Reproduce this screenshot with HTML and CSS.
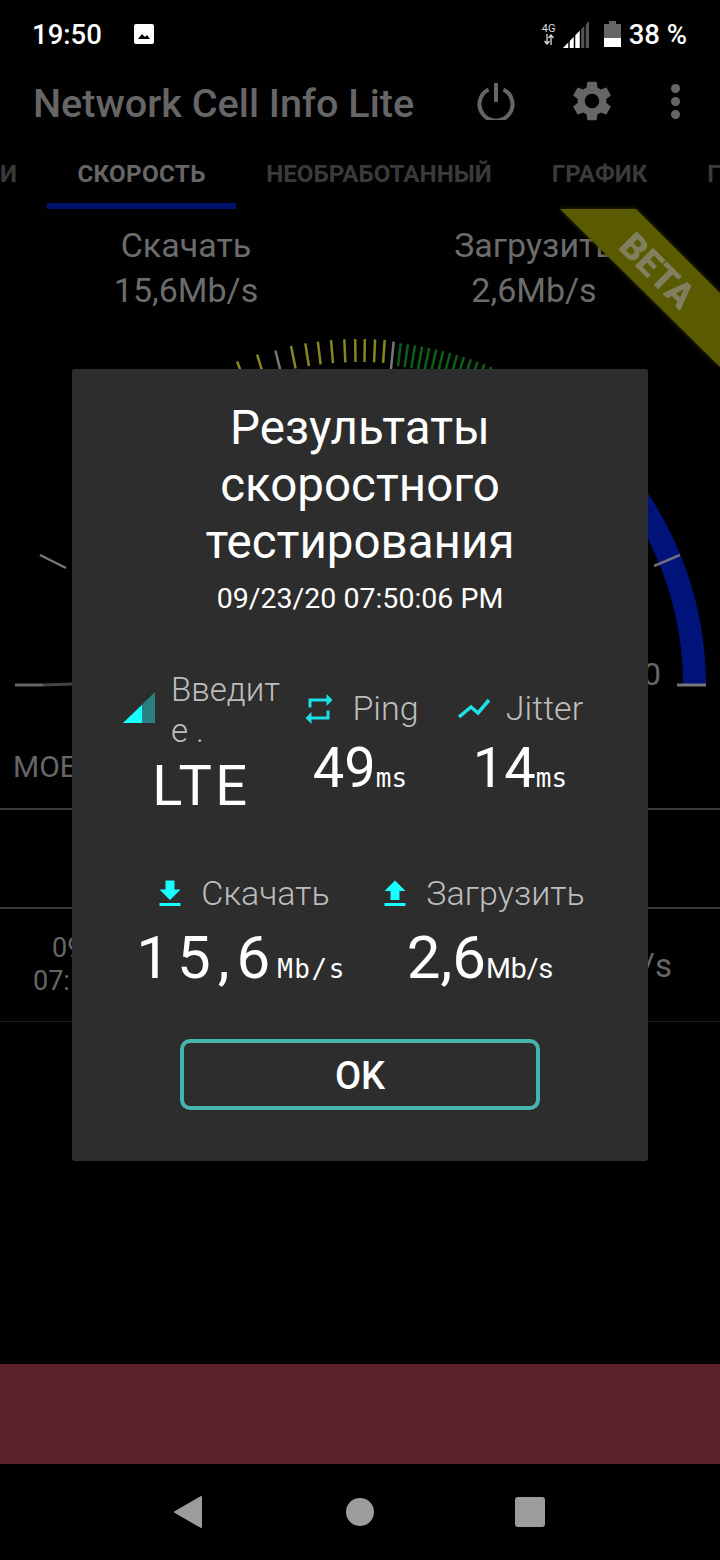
FILE: index.html
```html
<!DOCTYPE html>
<html lang="ru">
<head>
    <meta charset="UTF-8">
    <meta name="viewport" content="width=device-width, initial-scale=1.0">
    <title>Network Cell Info Lite</title>
    <link rel="stylesheet" href="styles.css">
</head>
<body>
    <div class="screen">
        <!-- status bar -->
        <div class="statusBar">
            <div class="statusLeft">
                <span class="clock">19:50</span>
                <svg class="imgIcon" width="22" height="22" viewBox="0 0 22 22">
                    <path d="M3 1h16a2 2 0 0 1 2 2v16a2 2 0 0 1-2 2H3a2 2 0 0 1-2-2V3a2 2 0 0 1 2-2z" fill="#fff"/>
                    <path d="M5 16l4-5 3 3 2-2 3 4z" fill="#000"/>
                </svg>
            </div>
            <div class="statusRight">
                <div class="netType">
                    <span>4G</span>
                    <svg width="12" height="11" viewBox="0 0 12 11">
                        <path d="M4 0v9M1.500 7L4 10l2.500-3M8 11V2M5.500 4L8 1l2.500 3" fill="none" stroke="#ddd" stroke-width="1.300"/>
                    </svg>
                </div>
                <svg class="signal" width="28" height="27" viewBox="0 0 28 27">
                    <path d="M1 27L27 0v27z" fill="#555"/>
                    <path d="M1 27L18 9.500V27z" fill="#fff"/>
                    <path d="M7 27v-8M12.500 27V13M18.500 27V8M23 27V3" stroke="#000" stroke-width="1.500"/>
                </svg>
                <svg class="battery" width="17" height="26" viewBox="0 0 17 26">
                    <path d="M5 3V0h7v3h5v23H0V3z" fill="#666"/>
                    <path d="M0 17h17v9H0z" fill="#fff"/>
                </svg>
                <span class="clock">38 %</span>
            </div>
        </div>

        <!-- app bar -->
        <header class="appBar">
            <h1>Network Cell Info Lite</h1>
            <svg class="barIcon" width="38" height="38" viewBox="0 0 38 38">
                <path d="M11.500 7.500a16.500 16.500 0 1 0 15 0M19 1v19" fill="none" stroke="#666" stroke-width="4"/>
            </svg>
            <svg class="barIcon gearIcon" width="48" height="48" viewBox="0 0 24 24">
                <path fill="#666" d="M19.140 12.940c.04-.3.06-.61.06-.94 0-.32-.02-.64-.07-.94l2.030-1.580c.18-.14.23-.41.12-.61l-1.920-3.320c-.12-.22-.37-.29-.59-.22l-2.390.96c-.5-.38-1.030-.7-1.620-.94l-.36-2.540c-.04-.24-.24-.41-.48-.41h-3.840c-.24 0-.43.17-.47.41l-.36 2.540c-.59.24-1.130.57-1.620.94l-2.390-.96c-.22-.08-.47 0-.59.22L2.740 8.870c-.12.21-.08.47.12.61l2.030 1.580c-.05.3-.09.63-.09.94s.02.64.07.94l-2.030 1.580c-.18.14-.23.41-.12.61l1.920 3.320c.12.22.37.29.59.22l2.390-.96c.5.38 1.030.7 1.620.94l.36 2.540c.05.24.24.41.48.41h3.840c.24 0 .44-.17.47-.41l.36-2.540c.59-.24 1.130-.56 1.620-.94l2.390.96c.22.08.47 0 .59-.22l1.920-3.320c.12-.22.07-.47-.12-.61l-2.010-1.580zM12 15.600c-1.980 0-3.600-1.620-3.600-3.600s1.620-3.600 3.600-3.600 3.600 1.620 3.600 3.600-1.620 3.600-3.600 3.600z"/>
            </svg>
            <div class="barIcon moreIcon"><i></i><i></i><i></i></div>
        </header>

        <!-- tabs -->
        <nav class="tabs">
            <div class="tab">И</div>
            <div class="tab active">СКОРОСТЬ</div>
            <div class="tab">НЕОБРАБОТАННЫЙ</div>
            <div class="tab">ГРАФИК</div>
            <div class="tab">ГЕО</div>
        </nav>

        <!-- speed numbers -->
        <div class="speedRow">
            <div class="speedCol">
                <div>Скачать</div>
                <div>15,6Mb/s</div>
            </div>
            <div class="speedCol">
                <div>Загрузить</div>
                <div>2,6Mb/s</div>
            </div>
        </div>

        <!-- gauge -->
        <svg class="gauge" width="720" height="370" viewBox="0 330 720 370">
            <path d="M694.500 685A334.500 334.500 0 0 0 616 470" fill="none" stroke="#00137a" stroke-width="23"/>
            <g stroke="#87871f" stroke-width="2.500">
                <line x1="360" y1="339" x2="360" y2="362" transform="rotate(-20.800 360 685)"/>
                <line x1="360" y1="339" x2="360" y2="362" transform="rotate(-17.300 360 685)"/>
                <line x1="360" y1="339" x2="360" y2="362" transform="rotate(-11.500 360 685)"/>
                <line x1="360" y1="339" x2="360" y2="362" transform="rotate(-9.100 360 685)"/>
                <line x1="360" y1="339" x2="360" y2="362" transform="rotate(-7 360 685)"/>
                <line x1="360" y1="339" x2="360" y2="362" transform="rotate(-4.800 360 685)"/>
                <line x1="360" y1="339" x2="360" y2="362" transform="rotate(-2.600 360 685)"/>
                <line x1="360" y1="339" x2="360" y2="362" transform="rotate(-.8 360 685)"/>
                <line x1="360" y1="339" x2="360" y2="362" transform="rotate(.8 360 685)"/>
                <line x1="360" y1="339" x2="360" y2="362" transform="rotate(2.500 360 685)"/>
                <line x1="360" y1="339" x2="360" y2="362" transform="rotate(4.100 360 685)"/>
            </g>
            <g stroke="#0f5f14" stroke-width="2.500">
                <line x1="360" y1="341" x2="360" y2="364" transform="rotate(6.800 360 685)"/>
                <line x1="360" y1="341" x2="360" y2="364" transform="rotate(8 360 685)"/>
                <line x1="360" y1="341" x2="360" y2="364" transform="rotate(9.200 360 685)"/>
                <line x1="360" y1="341" x2="360" y2="364" transform="rotate(10.400 360 685)"/>
                <line x1="360" y1="341" x2="360" y2="364" transform="rotate(11.600 360 685)"/>
                <line x1="360" y1="341" x2="360" y2="364" transform="rotate(12.800 360 685)"/>
                <line x1="360" y1="341" x2="360" y2="364" transform="rotate(14 360 685)"/>
                <line x1="360" y1="341" x2="360" y2="364" transform="rotate(15.200 360 685)"/>
                <line x1="360" y1="341" x2="360" y2="364" transform="rotate(16.400 360 685)"/>
                <line x1="360" y1="341" x2="360" y2="364" transform="rotate(17.600 360 685)"/>
                <line x1="360" y1="341" x2="360" y2="364" transform="rotate(18.800 360 685)"/>
                <line x1="360" y1="341" x2="360" y2="364" transform="rotate(20 360 685)"/>
                <line x1="360" y1="341" x2="360" y2="364" transform="rotate(21.200 360 685)"/>
                <line x1="360" y1="341" x2="360" y2="364" transform="rotate(22.400 360 685)"/>
            </g>
            <g stroke="#777" stroke-width="2.500">
                <line x1="360" y1="340" x2="360" y2="372" transform="rotate(-14.200 360 685)"/>
                <line x1="360" y1="340" x2="360" y2="372" transform="rotate(5.600 360 685)"/>
                <line x1="40" y1="555" x2="66" y2="568"/>
                <line x1="680" y1="555" x2="654" y2="566" stroke="#6d6d80"/>
            </g>
            <line x1="15" y1="685" x2="43" y2="685" stroke="#666" stroke-width="3"/>
            <line x1="43" y1="685" x2="72" y2="684" stroke="#444" stroke-width="3"/>
            <line x1="677" y1="685" x2="706" y2="685" stroke="#777" stroke-width="3"/>
            <text class="gaugeText" x="661" y="685" text-anchor="end">100</text>
        </svg>

        <!-- results table -->
        <div class="tableHead">МОБИЛЬНЫЙ</div>
        <div class="tableRow"></div>
        <div class="tableData">
            <div class="dateCell">09/23/20<br>07:50:06 PM</div>
            <div class="valueCell">2,6Mb/s</div>
        </div>

        <div class="spacer"></div>
        <div class="adBanner"></div>

        <!-- android nav -->
        <div class="navBar">
            <svg width="30" height="34" viewBox="0 0 30 34">
                <path d="M28 2L2 17l26 15z" fill="#9c9c9c" stroke="#9c9c9c" stroke-width="2" stroke-linejoin="round"/>
            </svg>
            <div class="navCircle"></div>
            <div class="navSquare"></div>
        </div>

        <!-- beta ribbon -->
        <svg class="ribbon" width="160" height="158" viewBox="560 209 160 158">
            <polygon points="560,209 636,209 720,293 720,367" fill="#5a5a00"/>
            <text class="ribbonText" x="657" y="283" text-anchor="middle" transform="rotate(45 657 271)">BETA</text>
        </svg>

        <!-- result dialog -->
        <div class="dialog">
            <h2>Результаты скоростного тестирования</h2>
            <div class="dialogDate">09/23/20 07:50:06 PM</div>

            <div class="statsTop">
                <div class="stat">
                    <div class="statHead wrapHead">
                        <svg width="32" height="32" viewBox="0 0 32 32">
                            <path d="M0 31L32 0v31z" fill="#2a8080"/>
                            <path d="M0 31L19 13v18z" fill="#18ffff"/>
                        </svg>
                        <span class="statLabel wrapLabel">Введите .</span>
                    </div>
                    <div class="statValue lte">LTE</div>
                </div>
                <div class="stat">
                    <div class="statHead">
                        <svg width="36" height="36" viewBox="0 0 24 24">
                            <path fill="#1fdfe6" d="M7 7h10v3l4-4-4-4v3H5v6h2V7zm10 10H7v-3l-4 4 4 4v-3h12v-6h-2v4z"/>
                        </svg>
                        <span class="statLabel">Ping</span>
                    </div>
                    <div class="statValue">49<span class="unit">ms</span></div>
                </div>
                <div class="stat">
                    <div class="statHead">
                        <svg width="34" height="24" viewBox="0 0 34 24">
                            <path d="M2 20l12-10 7 6L32 3" fill="none" stroke="#1fdfe6" stroke-width="3.500"/>
                        </svg>
                        <span class="statLabel">Jitter</span>
                    </div>
                    <div class="statValue">14<span class="unit">ms</span></div>
                </div>
            </div>

            <div class="statsBottom">
                <div class="stat">
                    <div class="statHead">
                        <svg width="36" height="36" viewBox="0 0 24 24">
                            <path fill="#18ffff" d="M19 9h-4V3H9v6H5l7 7 7-7zM5 18v2h14v-2H5z"/>
                        </svg>
                        <span class="statLabel">Скачать</span>
                    </div>
                    <div class="statValue big wide">15,6<span class="unit bigUnit">Mb/s</span></div>
                </div>
                <div class="stat">
                    <div class="statHead">
                        <svg width="36" height="36" viewBox="0 0 24 24">
                            <path fill="#18ffff" d="M9 16h6v-6h4l-7-7-7 7h4zm-4 2h14v2H5z"/>
                        </svg>
                        <span class="statLabel">Загрузить</span>
                    </div>
                    <div class="statValue big">2,6<span class="sansUnit">Mb/s</span></div>
                </div>
            </div>

            <button class="okBtn">OK</button>
        </div>
    </div>
</body>
</html>
```

FILE: styles.css
```css
* {
    box-sizing: border-box;
}

body {
    margin: 0;
    background-color: #000;
    font-family: "Roboto", "Noto Sans", sans-serif;
}

.screen {
    position: relative;
    width: 720px;
    height: 1560px;
    overflow: hidden;
    display: flex;
    flex-direction: column;
    background-color: #000;
}

/* status bar */
.statusBar {
    height: 68px;
    flex-shrink: 0;
    display: flex;
    align-items: center;
    justify-content: space-between;
    padding: 0 33px 0 32px;
    color: #fff;
}

.statusLeft,
.statusRight {
    display: flex;
    align-items: center;
}

.clock {
    font-size: 27.500px;
    font-weight: 500;
}

.imgIcon {
    margin-left: 31px;
}

.netType {
    display: flex;
    flex-direction: column;
    align-items: center;
    width: 14px;
    font-size: 11px;
    line-height: 11px;
    color: #ddd;
}

.signal {
    margin-left: 6px;
}

.battery {
    margin-left: 14px;
    margin-right: 8px;
}

/* app bar */
.appBar {
    height: 72px;
    flex-shrink: 0;
    display: flex;
    align-items: center;
    padding-left: 33px;
}

.appBar h1 {
    margin: 0 0 2px;
    width: 444px;
    font-size: 39.600px;
    font-weight: 500;
    color: #666;
    white-space: nowrap;
}

.barIcon {
    margin-bottom: 6px;
}

.gearIcon {
    margin-left: 53px;
}

.moreIcon {
    margin-left: 55px;
    display: flex;
    flex-direction: column;
    gap: 4px;
}

.moreIcon i {
    display: block;
    width: 9px;
    height: 9px;
    border-radius: 50%;
    background-color: #666;
}

/* tabs */
.tabs {
    height: 69px;
    flex-shrink: 0;
    display: flex;
    margin-left: -30px;
}

.tab {
    flex-shrink: 0;
    padding: 20px 30px 0;
    font-size: 24.200px;
    font-weight: 700;
    color: #3a3a3a;
    white-space: nowrap;
}

.tab.active {
    padding: 20px 30.500px 0;
    letter-spacing: .3px;
    color: #666;
    border-bottom: 6px solid #00126e;
}

/* speed numbers */
.speedRow {
    height: 121px;
    flex-shrink: 0;
    display: flex;
    padding-top: 14px;
}

.speedCol {
    text-align: center;
    font-size: 34px;
    line-height: 45px;
    color: #6c6c6c;
}

.speedCol:first-child {
    width: 372px;
}

.speedCol:last-child {
    width: 324px;
}

/* gauge */
.gauge {
    display: block;
    flex-shrink: 0;
}

.gaugeText {
    font-size: 32px;
    fill: #666;
}

/* table behind the dialog */
.tableHead {
    height: 110px;
    flex-shrink: 0;
    padding: 49px 0 0 13px;
    font-size: 30px;
    color: #666;
    border-bottom: 2px solid #3a3a3a;
}

.tableRow {
    height: 99px;
    flex-shrink: 0;
    border-bottom: 2px solid #3a3a3a;
}

.tableData {
    height: 113px;
    flex-shrink: 0;
    display: flex;
    justify-content: space-between;
    align-items: center;
    padding: 0 48px 0 33px;
    border-bottom: 1px solid #1c1c1c;
    color: #666;
}

.dateCell {
    font-size: 27px;
    line-height: 33px;
    text-align: center;
}

.valueCell {
    font-size: 33px;
}

.spacer {
    flex: 1;
}

.adBanner {
    height: 100px;
    flex-shrink: 0;
    background-color: #5c2229;
}

/* android nav */
.navBar {
    height: 96px;
    flex-shrink: 0;
    display: flex;
    align-items: center;
    padding-left: 173px;
}

.navCircle {
    width: 28px;
    height: 28px;
    margin-left: 143px;
    border-radius: 50%;
    background-color: #9c9c9c;
}

.navSquare {
    width: 30px;
    height: 30px;
    margin-left: 141px;
    border-radius: 3px;
    background-color: #9c9c9c;
}

/* beta ribbon */
.ribbon {
    position: absolute;
    top: 209px;
    right: 0;
    filter: drop-shadow(0 0 2px #3a3a00);
}

.ribbonText {
    font-size: 36px;
    font-weight: 900;
    fill: #80805e;
}

/* dialog */
.dialog {
    position: absolute;
    top: 369px;
    left: 72px;
    width: 576px;
    height: 792px;
    padding: 31px 48px 0;
    border-radius: 3px;
    background-color: #2d2d2d;
    color: #fff;
    text-align: center;
}

.dialog h2 {
    margin: 0;
    padding: 0 30px;
    font-size: 47.500px;
    font-weight: 400;
    line-height: 57px;
}

.dialogDate {
    margin-top: 10px;
    font-size: 28.500px;
    line-height: 36px;
}

.statsTop {
    margin-top: 52px;
    display: grid;
    grid-template-columns: repeat(3, 160px);
    align-items: start;
}

.statsTop .stat + .stat {
    padding-top: 19px;
}

.statsBottom {
    margin-top: 54px;
    display: grid;
    grid-template-columns: repeat(2, 240px);
}

.statHead {
    display: flex;
    align-items: center;
    justify-content: center;
    gap: 15px;
}

.statsBottom .statHead {
    gap: 13px;
    padding-left: 2px;
}

.wrapHead {
    justify-content: flex-start;
    gap: 16px;
    padding-left: 3px;
}

.wrapHead svg {
    flex-shrink: 0;
    margin-bottom: 4px;
}

.statLabel {
    font-size: 34px;
    font-weight: 300;
    line-height: 41px;
    color: #bdbdbd;
}

.wrapLabel {
    flex-shrink: 0;
    width: 112px;
    font-size: 33px;
    text-align: left;
    word-break: break-all;
}

.statValue {
    margin-top: 6px;
    font-size: 56px;
    font-weight: 400;
    line-height: 66px;
    white-space: nowrap;
}

.lte {
    padding-left: 3px;
    letter-spacing: 3.500px;
    margin-top: 2px;
}

.big {
    margin-top: 9px;
    font-size: 60px;
    line-height: 70px;
}

.wide {
    padding-left: 2px;
    letter-spacing: 7px;
}

.unit {
    font-family: "DejaVu Sans Mono", monospace;
    font-size: 26px;
    letter-spacing: 0;
}

.bigUnit {
    letter-spacing: 1.500px;
}

.sansUnit {
    font-size: 28.500px;
}

.okBtn {
    display: block;
    width: 360px;
    height: 71px;
    margin: 35px auto 0;
    padding: 3px 0 0;
    border: 4px solid #45b5ad;
    border-radius: 10px;
    background: transparent;
    color: #fff;
    font-family: "Roboto", sans-serif;
    font-size: 38px;
    font-weight: 500;
}
```
